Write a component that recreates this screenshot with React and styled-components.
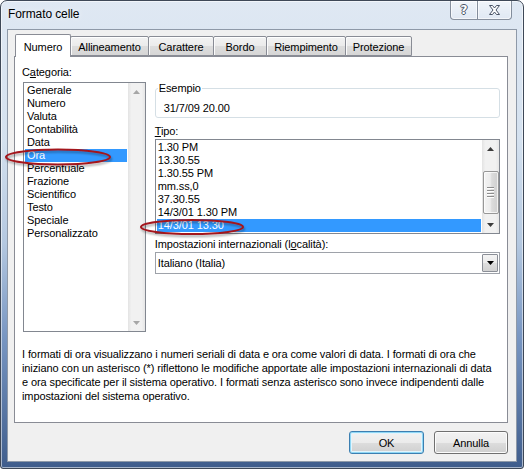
import React from "react";
import styled, { createGlobalStyle } from "styled-components";

const GlobalStyle = createGlobalStyle`
  html, body { margin: 0; padding: 0; background: #ffffff; }
  body {
    font-family: "Liberation Sans", "Noto Sans", sans-serif;
    font-size: 11px;
    letter-spacing: -0.1px;
    color: #000;
  }
  * { box-sizing: border-box; }
`;

const tabs = [
  { label: "Numero", width: 56, active: true },
  { label: "Allineamento", width: 79 },
  { label: "Carattere", width: 66 },
  { label: "Bordo", width: 54 },
  { label: "Riempimento", width: 80 },
  { label: "Protezione", width: 67 },
];

const categories = [
  "Generale",
  "Numero",
  "Valuta",
  "Contabilità",
  "Data",
  "Ora",
  "Percentuale",
  "Frazione",
  "Scientifico",
  "Testo",
  "Speciale",
  "Personalizzato",
];

const types = [
  "1.30 PM",
  "13.30.55",
  "1.30.55 PM",
  "mm.ss,0",
  "37.30.55",
  "14/3/01 1.30 PM",
  "14/3/01 13.30",
];

const Arrow = ({ dir, color }) => (
  <svg width="7" height="4" viewBox="0 0 7 4">
    <polygon
      points={dir === "up" ? "0,4 3.5,0 7,4" : "0,0 7,0 3.5,4"}
      fill={color}
    />
  </svg>
);

const ScrollBar = ({ disabled, thumbTop, thumbHeight }) => {
  const color = disabled ? "#a6a6a6" : "#3c3c3c";
  return (
    <Scroll>
      <ScrollBtn>
        <Arrow dir="up" color={color} />
      </ScrollBtn>
      <Track>
        {!disabled && (
          <Thumb $top={thumbTop} $height={thumbHeight}>
            <Grip />
            <Grip />
            <Grip />
            <Grip />
          </Thumb>
        )}
      </Track>
      <ScrollBtn>
        <Arrow dir="down" color={color} />
      </ScrollBtn>
    </Scroll>
  );
};

const App = () => {
  return (
    <>
      <GlobalStyle />
      <Window>
        <TitleBar>
          <Title>Formato celle</Title>
          <Captions>
            <CaptionBtn $width={27} $first>
              <HelpGlyph>?</HelpGlyph>
            </CaptionBtn>
            <CaptionBtn $width={35}>
              <svg width="11" height="10" viewBox="0 0 11 10">
                <polygon
                  points="0.5,0.5 3.5,0.5 5.5,3 7.5,0.5 10.5,0.5 7,5 10.5,9.5 7.5,9.5 5.5,7 3.5,9.5 0.5,9.5 4,5"
                  fill="#ffffff"
                  stroke="#4a5466"
                  strokeWidth="1"
                />
              </svg>
            </CaptionBtn>
          </Captions>
        </TitleBar>

        <Client>
          <TabRow>
            {tabs.map((t) => (
              <Tab key={t.label} $width={t.width} $active={t.active}>
                {t.label}
              </Tab>
            ))}
          </TabRow>

          <Panel>
            <Columns>
              <LeftCol>
                <Label>
                  C<u>a</u>tegoria:
                </Label>
                <CategoryList>
                  <Items>
                    {categories.map((c) => (
                      <Item key={c} $selected={c === "Ora"}>
                        {c}
                      </Item>
                    ))}
                  </Items>
                  <ScrollBar disabled />
                </CategoryList>
              </LeftCol>

              <RightCol>
                <Group>
                  <Legend>Esempio</Legend>
                  <Sample>31/7/09 20.00</Sample>
                </Group>
                <Label $top={7}>
                  <u>T</u>ipo:
                </Label>
                <TypeList>
                  <Items>
                    {types.map((t) => (
                      <Item key={t} $selected={t === "14/3/01 13.30"} $indent={1}>
                        {t}
                      </Item>
                    ))}
                  </Items>
                  <ScrollBar thumbTop={14} thumbHeight={43} />
                </TypeList>
                <Label $top={4}>
                  Impostazioni internazionali (l<u>o</u>calità):
                </Label>
                <Select>
                  <SelectValue>Italiano (Italia)</SelectValue>
                  <SelectBtn>
                    <Arrow dir="down" color="#000" />
                  </SelectBtn>
                </Select>
              </RightCol>
            </Columns>

            <Description>
              I formati di ora visualizzano i numeri seriali di data e ora come valori di data. I formati di ora che
              <br />
              iniziano con un asterisco (*) riflettono le modifiche apportate alle impostazioni internazionali di data
              <br />
              e ora specificate per il sistema operativo. I formati senza asterisco sono invece indipendenti dalle
              <br />
              impostazioni del sistema operativo.
            </Description>
          </Panel>

          <ButtonRow>
            <Button $width={75} $default>
              OK
            </Button>
            <Button $width={74}>Annulla</Button>
          </ButtonRow>
        </Client>

        <Marks width="524" height="469" viewBox="0 0 524 469">
          <defs>
            <filter id="sh" x="-20%" y="-50%" width="140%" height="200%">
              <feDropShadow dx="1" dy="2" stdDeviation="1.2" floodColor="#000" floodOpacity="0.35" />
            </filter>
          </defs>
          <ellipse cx="57" cy="156" rx="52" ry="7.5" fill="none" stroke="#a3151f" strokeWidth="2" filter="url(#sh)" />
          <ellipse cx="191" cy="226" rx="51" ry="7" fill="none" stroke="#a3151f" strokeWidth="2" filter="url(#sh)" />
        </Marks>
      </Window>
    </>
  );
};

const Window = styled.div`
  position: relative;
  width: 524px;
  height: 469px;
  display: flex;
  flex-direction: column;
  padding: 0 6px 6px 6px;
  border: 1px solid #3e4857;
  border-radius: 7px 7px 3px 3px;
  background: linear-gradient(
    180deg,
    #dfe8f3 0%,
    #d4e1ef 30%,
    #b4c8e0 52%,
    #7896c2 72%,
    #3f5d8c 100%
  );
  box-shadow: inset 0 0 0 1px rgba(255, 255, 255, 0.55);
  overflow: hidden;
`;

const TitleBar = styled.div`
  height: 28px;
  flex: none;
  display: flex;
  align-items: center;
  justify-content: space-between;
  padding-left: 1px;
`;

const Title = styled.div`
  font-size: 12px;
  letter-spacing: -0.1px;
  color: #000;
  text-shadow: 0 0 6px rgba(255, 255, 255, 0.9);
  margin-top: -2px;
`;

const Captions = styled.div`
  align-self: flex-start;
  display: flex;
  margin-right: 5px;
`;

const CaptionBtn = styled.div`
  width: ${(p) => p.$width}px;
  height: 19px;
  display: flex;
  align-items: center;
  justify-content: center;
  border: 1px solid rgba(50, 62, 82, 0.55);
  border-top: none;
  ${(p) => (p.$first ? "border-right: none;" : "")}
  border-radius: ${(p) => (p.$first ? "0 0 0 4px" : "0 0 4px 0")};
  background: linear-gradient(180deg, rgba(255, 255, 255, 0.55), rgba(225, 233, 243, 0.6));
  box-shadow: inset 0 0 0 1px rgba(255, 255, 255, 0.6);
`;

const HelpGlyph = styled.span`
  font-family: "DejaVu Sans", sans-serif;
  font-size: 12px;
  font-weight: bold;
  color: #fff;
  line-height: 1;
  text-shadow: 1px 0 0 #4a5466, -1px 0 0 #4a5466, 0 1px 0 #4a5466, 0 -1px 0 #4a5466;
`;

const Client = styled.div`
  flex: 1;
  display: flex;
  flex-direction: column;
  padding: 4px 8px 0 6px;
  background: #f0f0f0;
  border: 1px solid #8e99a8;
`;

const TabRow = styled.div`
  position: relative;
  z-index: 1;
  height: 23px;
  margin-bottom: -1px;
  display: flex;
  align-items: flex-end;
  padding-left: 1px;
`;

const Tab = styled.div`
  position: relative;
  width: ${(p) => p.$width}px;
  height: ${(p) => (p.$active ? 23 : 20)}px;
  margin-bottom: ${(p) => (p.$active ? 0 : 1)}px;
  margin-left: -1px;
  &:first-child { margin-left: 0; }
  z-index: ${(p) => (p.$active ? 2 : 1)};
  display: flex;
  align-items: center;
  justify-content: center;
  padding-top: ${(p) => (p.$active ? 1 : 2)}px;
  border: 1px solid #898c95;
  border-bottom: ${(p) => (p.$active ? "none" : "1px solid #898c95")};
  border-radius: 2px 2px 0 0;
  background: ${(p) =>
    p.$active
      ? "#ffffff"
      : "linear-gradient(180deg, #f3f3f3 0%, #ebebeb 50%, #dddddd 51%, #d6d6d6 100%)"};
  box-shadow: ${(p) => (p.$active ? "none" : "inset 0 1px 0 #fff, inset 1px 0 0 #fbfbfb")};
`;

const Panel = styled.div`
  height: 367px;
  flex: none;
  background: #ffffff;
  border: 1px solid #898c95;
  padding: 9px 7px 0 7px;
`;

const Columns = styled.div`
  display: flex;
  gap: 9px;
`;

const LeftCol = styled.div`
  width: 124px;
  display: flex;
  flex-direction: column;
`;

const RightCol = styled.div`
  width: 346px;
  display: flex;
  flex-direction: column;
`;

const Label = styled.div`
  height: 13px;
  line-height: 13px;
  margin-top: ${(p) => p.$top || 0}px;
  margin-bottom: ${(p) => (p.$top === undefined ? 3 : 1)}px;
  white-space: nowrap;
  u { text-underline-offset: 1px; }
`;

const CategoryList = styled.div`
  margin-left: 1px;
  height: 250px;
  display: flex;
  background: #fff;
  border: 1px solid #828790;
`;

const TypeList = styled.div`
  height: 95px;
  display: flex;
  background: #fff;
  border: 1px solid #828790;
`;

const Items = styled.div`
  flex: 1;
  padding: 1px;
  overflow: hidden;
`;

const Item = styled.div`
  height: 13px;
  line-height: 13px;
  padding-left: ${(p) => (p.$indent !== undefined ? p.$indent : 2)}px;
  white-space: nowrap;
  background: ${(p) => (p.$selected ? "#3399ff" : "transparent")};
  color: ${(p) => (p.$selected ? "#fff" : "#000")};
`;

const Scroll = styled.div`
  width: 17px;
  flex: none;
  display: flex;
  flex-direction: column;
  background: linear-gradient(90deg, #e3e3e3 0%, #f1f1f1 20%, #f1f1f1 80%, #e6e6e6 100%);
`;

const ScrollBtn = styled.div`
  height: 17px;
  flex: none;
  display: flex;
  align-items: center;
  justify-content: center;
`;

const Track = styled.div`
  flex: 1;
  display: flex;
  flex-direction: column;
  align-items: center;
`;

const Thumb = styled.div`
  margin-top: ${(p) => p.$top}px;
  width: 16px;
  height: ${(p) => p.$height}px;
  display: flex;
  flex-direction: column;
  align-items: center;
  justify-content: center;
  gap: 1px;
  border: 1px solid #979797;
  border-radius: 2px;
  background: linear-gradient(90deg, #f4f4f4 0%, #ececec 45%, #dcdcdc 55%, #cfcfcf 100%);
  box-shadow: inset 0 0 0 1px rgba(255, 255, 255, 0.7);
`;

const Grip = styled.div`
  width: 7px;
  height: 2px;
  border-top: 1px solid #8d8d8d;
  border-bottom: 1px solid #ffffff;
`;

const Group = styled.fieldset`
  margin: 16px 0 0 0;
  padding: 7px 8px 2px 8px;
  border: 1px solid #d5dfe5;
  border-radius: 3px;
  min-width: 0;
`;

const Legend = styled.legend`
  padding: 0 1px;
  margin-left: -6px;
  line-height: 13px;
`;

const Sample = styled.div`
  height: 13px;
  line-height: 13px;
`;

const Select = styled.div`
  height: 22px;
  display: flex;
  align-items: center;
  padding: 0 1px 0 2px;
  background: #fff;
  border: 1px solid #9ea2a9;
`;

const SelectValue = styled.div`
  flex: 1;
  line-height: 13px;
`;

const SelectBtn = styled.div`
  width: 16px;
  height: 18px;
  display: flex;
  align-items: center;
  justify-content: center;
  border: 1px solid #8b8f97;
  border-radius: 1px;
  background: linear-gradient(180deg, #f4f4f4 0%, #ebebeb 50%, #dedede 51%, #d2d2d2 100%);
`;

const Description = styled.div`
  margin-top: 15px;
  line-height: 14px;
  white-space: nowrap;
`;

const ButtonRow = styled.div`
  display: flex;
  justify-content: flex-end;
  gap: 10px;
  margin-top: 8px;
`;

const Button = styled.div`
  width: ${(p) => p.$width}px;
  height: 23px;
  display: flex;
  align-items: center;
  justify-content: center;
  border: 1px solid ${(p) => (p.$default ? "#3c7fb1" : "#707070")};
  border-radius: 3px;
  background: linear-gradient(180deg, #f2f2f2 0%, #ebebeb 50%, #dddddd 51%, #cfcfcf 100%);
  box-shadow: ${(p) =>
    p.$default ? "inset 0 0 0 1px #8fd7f5, inset 0 0 0 2px #e3f4fc" : "inset 0 0 0 1px #fcfcfc"};
`;

const Marks = styled.svg`
  position: absolute;
  left: 0;
  top: 0;
  pointer-events: none;
  overflow: visible;
`;

export default App;
